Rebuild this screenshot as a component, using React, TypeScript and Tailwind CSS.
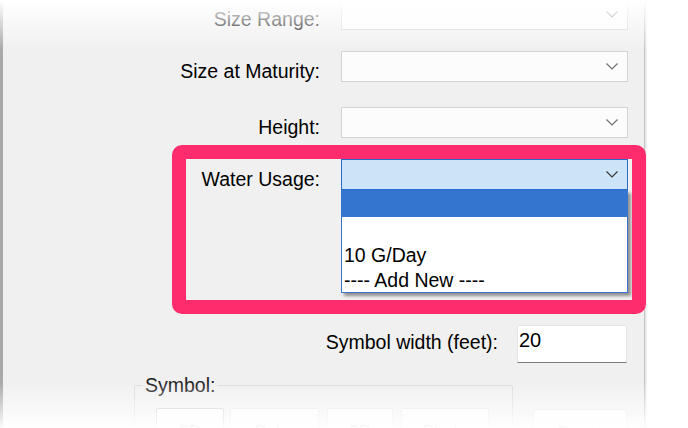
import React from "react";

function Chevron({ dark }: { dark?: boolean }) {
  return (
    <svg width="12" height="7" viewBox="0 0 12 7" className="shrink-0">
      <path
        d="M0.5 0.5 L6 6 L11.5 0.5"
        fill="none"
        stroke={dark ? "#333333" : "#6e6e6e"}
        strokeWidth="1.1"
      />
    </svg>
  );
}

function Combo({ active }: { active?: boolean }) {
  return (
    <div
      className={
        active
          ? "flex h-[31px] w-[287px] items-center justify-end border border-[#2a6ac8] bg-[#cce4f7] pr-[9px]"
          : "flex h-[31px] w-[287px] items-center justify-end border border-[#d3d3d3] bg-[#fcfcfc] pr-[9px]"
      }
    >
      <Chevron dark={active} />
    </div>
  );
}

function FieldRow({ label, className, children }: { label: string; className: string; children: React.ReactNode }) {
  return (
    <div className={`flex h-[31px] items-center ${className}`}>
      <div className="mt-[8px] w-[317px] text-right leading-[22px]">{label}</div>
      <div className="relative ml-[21px]">{children}</div>
    </div>
  );
}

const options = ["", "", "10 G/Day", "---- Add New ----"];
const symbolButtons = [
  { label: "3D", w: "w-[68px]", selected: true },
  { label: "Color", w: "w-[89px] ml-[6px]" },
  { label: "2D", w: "w-[66px] ml-[8px]" },
  { label: "Photo", w: "w-[88px] ml-[8px]" },
];

export default function App() {
  return (
    <div className="relative h-[428px] w-[688px] overflow-hidden bg-white font-['Liberation_Sans',Arial,sans-serif] text-[19.5px] text-black">
      <div className="flex h-[428px] w-[645px] flex-col border-l-[3px] border-r border-l-[#a9a9a9] border-r-[#c4c4c4] bg-[#f0f0f0] shadow-[1px_0_2px_rgba(0,0,0,0.15)]">
        <FieldRow label="Size Range:" className="mt-[-1px]">
          <Combo />
        </FieldRow>
        <FieldRow label="Size at Maturity:" className="mt-[21px]">
          <Combo />
        </FieldRow>
        <FieldRow label="Height:" className="mt-[25px]">
          <Combo />
        </FieldRow>
        <FieldRow label="Water Usage:" className="mt-[21px]">
          <Combo active />
          <div className="absolute left-0 top-full z-10 w-[287px] border border-t-0 border-[#3375cf] bg-white shadow-[3px_3px_3px_rgba(0,0,0,0.4)]">
            {options.map((o, i) => (
              <div
                key={i}
                className={
                  i === 0
                    ? "h-[27px] bg-[#3375cf] pl-[2px] leading-[27px] text-white"
                    : "h-[25px] pl-[2px] leading-[27px]"
                }
              >
                {o}
              </div>
            ))}
          </div>
        </FieldRow>

        <div className="mt-[135px] flex h-[38px] items-center">
          <div className="mt-[-4px] w-[495px] text-right leading-[22px]">Symbol width (feet):</div>
          <div className="ml-[19px] h-[38px] w-[110px] border border-[#e6e6e6] border-b-[#7a7a7a] bg-white pl-[1px] pt-[2px] text-[20px] leading-[24px]">
            20
          </div>
        </div>

        <div className="mt-[11px] flex items-start">
          <fieldset className="ml-[131px] h-[80px] w-[379px] rounded-[2px] border border-[#dcdcdc] pl-[8px] pt-[12px]">
            <legend className="px-[2px] leading-[22px] text-[#222]">Symbol:</legend>
            <div className="ml-[13px] flex">
              {symbolButtons.map((b) => (
                <div
                  key={b.label}
                  className={`h-[34px] ${b.w} rounded-[2px] border ${
                    b.selected ? "border-[#c6c6c6]" : "border-[#e2e2e2]"
                  } bg-[#fdfdfd] pt-[12px] text-center text-[17px] leading-[22px] text-[#9a9a9a]`}
                >
                  {b.label}
                </div>
              ))}
            </div>
          </fieldset>
          <div className="ml-[20px] mt-[35px] h-[34px] w-[94px] rounded-[2px] border border-[#e2e2e2] bg-[#fdfdfd] pt-[12px] text-center text-[17px] leading-[22px] text-[#9a9a9a]">
            Reset
          </div>
        </div>
      </div>

      <div className="pointer-events-none absolute left-[172px] top-[145px] z-20 h-[169px] w-[474px] rounded-[10px] border-[14px] border-[#fe2c6c]" />

      <div className="pointer-events-none absolute left-0 top-0 z-30 h-[50px] w-full bg-linear-to-b from-white to-white/0" />
      <div className="pointer-events-none absolute bottom-0 left-0 z-30 h-[46px] w-full bg-linear-to-t from-white/95 to-white/0" />
    </div>
  );
}
